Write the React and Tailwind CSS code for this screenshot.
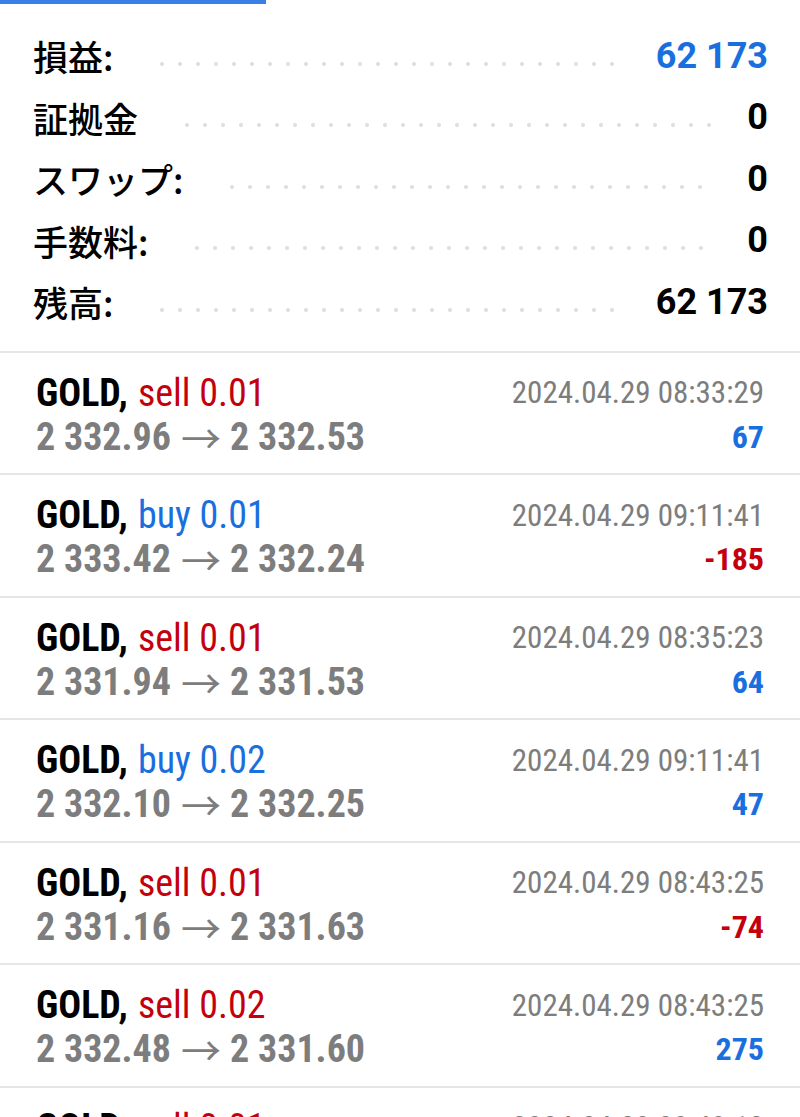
import React from 'react';

const summary = [
  { label: '損益:', value: '62 173', blue: true },
  { label: '証拠金', value: '0' },
  { label: 'スワップ:', value: '0' },
  { label: '手数料:', value: '0' },
  { label: '残高:', value: '62 173' },
];

const trades = [
  { side: 'sell', vol: '0.01', open: '2 332.96', close: '2 332.53', time: '2024.04.29 08:33:29', profit: '67' },
  { side: 'buy', vol: '0.01', open: '2 333.42', close: '2 332.24', time: '2024.04.29 09:11:41', profit: '-185' },
  { side: 'sell', vol: '0.01', open: '2 331.94', close: '2 331.53', time: '2024.04.29 08:35:23', profit: '64' },
  { side: 'buy', vol: '0.02', open: '2 332.10', close: '2 332.25', time: '2024.04.29 09:11:41', profit: '47' },
  { side: 'sell', vol: '0.01', open: '2 331.16', close: '2 331.63', time: '2024.04.29 08:43:25', profit: '-74' },
  { side: 'sell', vol: '0.02', open: '2 332.48', close: '2 331.60', time: '2024.04.29 08:43:25', profit: '275' },
  { side: 'sell', vol: '0.01', open: '2 331.02', close: '2 330.88', time: '2024.04.29 08:48:12', profit: '14' },
];

const SummaryRow = ({ label, value, blue }) => (
  <div className="flex items-center h-[61.5px]">
    <span className="font-['Noto_Sans_CJK_JP',sans-serif] font-medium text-[35px] text-black leading-none">
      {label}
    </span>
    <span className="flex-1 h-[6px] mt-[16px] ml-[40px] mr-[32px] bg-[radial-gradient(circle,#e0e0e0_1.8px,transparent_2.3px)] bg-[length:18px_6px] bg-repeat-x" />
    <span
      className={`font-['Roboto',sans-serif] font-bold text-[36px] leading-none ${blue ? 'text-[#1a6fdf]' : 'text-black'}`}
    >
      {value}
    </span>
  </div>
);

const TradeRow = ({ trade }) => {
  const isBuy = trade.side === 'buy';
  const loss = trade.profit.startsWith('-');
  return (
    <div className="border-t-2 border-[#e6e6e6] pt-[18px] pb-[14.5px] pl-[36px] pr-[36px] flex justify-between font-['Roboto',sans-serif] font-stretch-condensed">
      <div className="flex flex-col">
        <div className="h-[44px] flex items-center text-[38px] leading-none">
          <span className="font-bold text-black">GOLD,</span>
          <span className={`ml-[10px] ${isBuy ? 'text-[#1a6fdf]' : 'text-[#c4000d]'}`}>
            {trade.side} {trade.vol}
          </span>
        </div>
        <div className="h-[44px] flex items-center text-[38px] leading-none font-bold text-[#7d7d7d]">
          <span>{trade.open}</span>
          <span className="font-['Noto_Sans_CJK_JP',sans-serif] font-normal text-[40px] ml-[10px] mr-[9px]">→</span>
          <span>{trade.close}</span>
        </div>
      </div>
      <div className="flex flex-col items-end">
        <div className="h-[44px] flex items-center text-[31px] leading-none text-[#7d7d7d]">
          {trade.time}
        </div>
        <div
          className={`h-[44px] flex items-center text-[32px] leading-none font-bold ${loss ? 'text-[#c4000d]' : 'text-[#1a6fdf]'}`}
        >
          {trade.profit}
        </div>
      </div>
    </div>
  );
};

export default function App() {
  return (
    <div className="w-[800px] h-[1117px] overflow-hidden bg-white">
      <div className="h-[4px] w-[266px] bg-[#3a7fe6]" />
      <div className="pt-[21px] pb-[18px] pl-[33px] pr-[32px]">
        {summary.map((row) => (
          <SummaryRow key={row.label} {...row} />
        ))}
      </div>
      {trades.map((t, i) => (
        <TradeRow key={i} trade={t} />
      ))}
    </div>
  );
}
